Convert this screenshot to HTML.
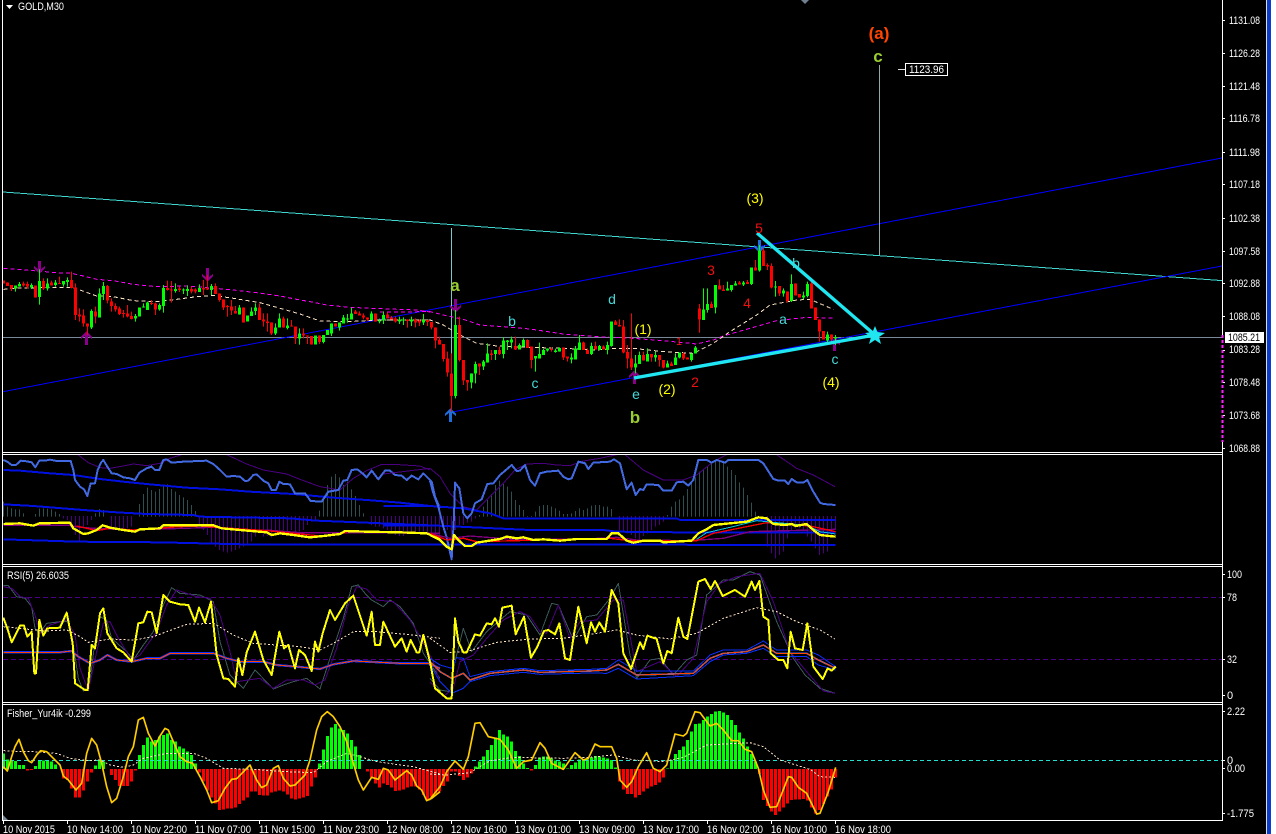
<!DOCTYPE html>
<html>
<head>
<meta charset="utf-8">
<title>GOLD,M30</title>
<style>
html,body{margin:0;padding:0;background:#fff;width:1276px;height:834px;overflow:hidden}
svg{display:block;position:absolute;left:0;top:0}
text{font-family:"Liberation Sans",sans-serif}
.ax{font-size:11px;fill:#fff}
.l{text-anchor:middle;font-size:14px}
.cy{fill:#45d9d9}.ye{fill:#ffff00}.re{fill:#f01010}
.bd{font-weight:bold;font-size:17px;text-anchor:middle}
</style>
</head>
<body>
<svg width="1276" height="834" viewBox="0 0 1276 834" xmlns="http://www.w3.org/2000/svg">
<rect x="0" y="0" width="1266" height="834" fill="#000"/>
<rect x="1266" y="0" width="1" height="834" fill="#d8dcec"/>
<rect x="1267" y="0" width="4" height="834" fill="#0a3ccc"/>
<rect x="1271" y="0" width="5" height="834" fill="#fff"/>
<polygon points="801,0 809,0 805,4" fill="#708090"/>

<!-- MAIN: straight lines -->
<g fill="none" shape-rendering="crispEdges">
<path d="M3 337.5H1222" stroke="#778899"/>
<path d="M3 192L1222 280.6" stroke="#40d8d0"/>
<path d="M3 391.7L1222 158" stroke="#0000ff"/>
<path d="M451 412.3L1222 266" stroke="#0000ff"/>
<path d="M451.5 228V412" stroke="#7cc8c8"/>
<path d="M879.5 65V255" stroke="#8fa8a8"/>
<path d="M898 69.5H906" stroke="#ddd"/>
<path d="M1222.5 335V442" stroke="#ff20ff" stroke-width="2" stroke-dasharray="3 2"/>
</g>
<!-- Main MAs -->
<g transform="translate(0,220) scale(.33333)" fill="none" stroke-width="3" shape-rendering="crispEdges">
<polyline stroke="#ff00ff" stroke-dasharray="12 9" points="10,145 100,152 170,158 215,160 250,168 290,178 340,182 400,193 470,200 560,198 610,202 700,210 770,218 840,228 890,238 930,245 980,255 1050,262 1140,266 1250,270 1290,276"/>
<polyline stroke="#ffe4c4" stroke-dasharray="12 9" points="10,208 60,204 120,203 180,202 220,203 245,212 290,228 340,230 400,242 470,245 530,238 590,230 640,226 700,235 780,248 830,262 900,282 960,303 1040,305 1140,300 1250,300 1290,300"/>
</g>
<g transform="translate(430,220) scale(.33333)" fill="none" stroke-width="3" shape-rendering="crispEdges">
<polyline stroke="#ff00ff" stroke-dasharray="12 9" points="-150,276 0,275 40,285 100,298 150,315 220,320 300,327 400,342 500,350 610,355 700,362 800,372 850,360 880,348 960,325 1040,302 1130,292 1215,295"/>
<polyline stroke="#ffe4c4" stroke-dasharray="12 9" points="-150,300 0,300 40,315 90,345 140,370 200,378 300,382 400,385 500,390 560,385 610,385 700,395 790,400 850,370 900,335 980,285 1020,255 1100,240 1140,238 1210,268"/>
</g>

<!-- arrows -->
<g fill="#8b008b" shape-rendering="crispEdges">
<polygon points="39.5,274 34,268 34,266 38,269 38,261 41,261 41,269 45,266 45,268"/>
<polygon points="207.5,282 202,276 202,274 206,277 206,268 209,268 209,277 213,274 213,276"/>
<polygon points="455.5,313 450,307 450,305 454,308 454,299 457,299 457,308 461,305 461,307"/>
<polygon points="86.5,331 92,337 92,339 88,336 88,345 85,345 85,336 81,339 81,337"/>
<polygon points="634.5,370 640,376 640,378 636,375 636,384 633,384 633,375 629,378 629,376"/>
<polygon points="835,338 840,343 840,345 836,342 836,351 833,351 833,342 830,345 830,343"/>
</g>
<g fill="#1e6fdc" shape-rendering="crispEdges">
<polygon points="450.5,408 456,414 456,416 452,413 452,422 449,422 449,413 445,416 445,414"/>
<polygon points="759.5,253 754,247 754,245 758,248 758,240 761,240 761,248 765,245 765,247"/>
</g>

<!-- candles -->
<g transform="translate(0,220) scale(1,.33333)" fill="none" shape-rendering="crispEdges">
<path stroke="#00ff00" stroke-width="1" d="M15.5 197V215M19.5 186V200M31.5 190V207M39.5 148V254M47.5 175V212M55.5 180V200M63.5 183V200M67.5 172V200M91.5 268V327M99.5 205V292M103.5 186V240M135.5 282V305M143.5 250V263M147.5 245V270M159.5 250V272M163.5 195V278M175.5 190V218M183.5 205V222M187.5 196V228M199.5 193V216M211.5 192V225M239.5 255V284M251.5 262V288M255.5 250V285M275.5 310V345M279.5 280V322M287.5 295V328M299.5 325V374M323.5 345V370M331.5 310V348M339.5 308V332M343.5 285V310M347.5 282V308M351.5 263V298M371.5 274V300M379.5 296V310M383.5 274V312M399.5 290V312M403.5 292V315M411.5 290V318M423.5 282V315M455.5 270V535M471.5 460V505M475.5 425V490M483.5 420V450M487.5 370V428M495.5 390V420M503.5 352V415M507.5 360V390M511.5 350V385M519.5 370V388M523.5 355V380M535.5 408V455M539.5 368V415M543.5 385V405M547.5 385V395M555.5 386V398M559.5 382V395M571.5 400V430M575.5 378V418M579.5 345V390M591.5 368V405M599.5 375V390M607.5 365V403M611.5 305V380M635.5 405V460M639.5 395V432M647.5 385V424M655.5 395V425M667.5 422V442M675.5 400V435M679.5 398V415M691.5 400V425M695.5 378V400M703.5 205V300M707.5 205V278M715.5 195V280M727.5 185V212M731.5 195V215M735.5 183V197M743.5 183V198M751.5 143V195M759.5 75V155M775.5 183V230M783.5 205V230M791.5 163V246M803.5 215V238M807.5 185V232M827.5 335V370M835.5 345V375"/>
<path stroke="#ff0000" stroke-width="1" d="M3.5 182V190M7.5 187V198M11.5 195V213M23.5 185V200M27.5 185V205M35.5 197V233M43.5 175V210M51.5 182V196M59.5 170V192M71.5 155V205M75.5 190V300M79.5 265V305M83.5 268V320M87.5 310V345M95.5 260V310M107.5 195V250M111.5 235V275M115.5 250V275M119.5 260V285M123.5 270V293M127.5 255V292M131.5 275V298M151.5 240V255M155.5 248V285M167.5 182V212M171.5 183V248M179.5 200V216M191.5 200V220M195.5 205V220M203.5 180V225M207.5 165V210M215.5 190V222M219.5 220V245M223.5 238V270M227.5 255V290M231.5 240V285M235.5 258V281M243.5 262V308M259.5 250V300M263.5 280V320M267.5 280V335M271.5 307V345M283.5 290V323M291.5 300V320M295.5 320V372M303.5 325V355M307.5 346V372M311.5 348V374M319.5 346V372M335.5 310V320M355.5 270V282M359.5 274V286M363.5 280V298M367.5 292V303M375.5 280V305M387.5 278V295M391.5 288V298M395.5 290V308M407.5 298V323M415.5 295V322M419.5 298V318M427.5 300V318M431.5 306V328M435.5 322V385M439.5 350V374M443.5 372V425M447.5 395V470M451.5 400V575M459.5 290V425M463.5 420V495M467.5 480V512M479.5 430V465M491.5 390V420M499.5 380V405M515.5 350V390M527.5 358V384M531.5 380V445M551.5 382V395M563.5 382V420M567.5 410V425M583.5 365V390M587.5 385V402M595.5 365V388M603.5 376V388M615.5 300V315M619.5 298V320M623.5 300V400M627.5 375V445M631.5 280V450M643.5 395V422M651.5 402V425M659.5 405V440M663.5 420V445M671.5 425V438M683.5 398V420M687.5 412V418M699.5 252V338M711.5 245V264M719.5 178V208M723.5 195V213M739.5 183V194M747.5 180V192M755.5 120V152M763.5 85V138M767.5 130V150M771.5 130V205M779.5 198V228M787.5 214V248M795.5 190V226M799.5 222V232M811.5 185V265M815.5 262V300M819.5 298V365M823.5 333V358M831.5 343V372"/>
<path stroke="#00ff00" stroke-width="3" d="M15.5 197V205M19.5 192V200M31.5 195V203M39.5 183V231M47.5 190V205M55.5 188V195M63.5 183V193M67.5 180V186M91.5 273V322M99.5 220V292M103.5 198V222M135.5 288V296M139.5 262V290M143.5 260V263M147.5 248V270M159.5 255V268M163.5 204V258M175.5 207V213M183.5 208V212M187.5 207V213M199.5 204V216M211.5 198V210M239.5 262V284M247.5 286V305M251.5 274V288M255.5 262V273M275.5 322V340M279.5 295V322M287.5 316V324M299.5 340V356M315.5 346V374M323.5 345V366M327.5 330V345M331.5 310V340M339.5 308V322M343.5 292V310M347.5 296V299M351.5 280V298M371.5 280V300M379.5 302V305M383.5 285V302M399.5 298V305M403.5 298V301M411.5 298V305M423.5 300V308M455.5 315V528M471.5 460V488M475.5 432V460M483.5 425V440M487.5 400V428M495.5 390V402M503.5 362V402M507.5 362V366M511.5 358V367M519.5 375V388M523.5 360V380M535.5 408V416M539.5 402V415M543.5 390V405M547.5 386V392M555.5 392V396M559.5 384V395M571.5 412V418M575.5 385V418M579.5 368V390M591.5 378V402M599.5 378V390M607.5 375V390M611.5 305V378M635.5 430V442M639.5 405V432M647.5 402V424M655.5 405V412M667.5 430V442M675.5 412V435M679.5 398V412M691.5 400V420M695.5 382V400M703.5 268V300M707.5 252V270M715.5 195V262M727.5 205V212M731.5 195V210M735.5 190V197M743.5 188V194M751.5 143V192M759.5 92V152M775.5 200V203M783.5 212V220M791.5 192V243M803.5 226V232M807.5 192V228M827.5 343V362M835.5 351V355"/>
<path stroke="#ff0000" stroke-width="3" d="M3.5 182V190M7.5 187V198M11.5 195V205M23.5 190V197M27.5 192V200M35.5 197V232M43.5 183V205M51.5 188V196M59.5 189V192M71.5 180V204M75.5 203V285M79.5 283V290M83.5 287V311M87.5 310V320M95.5 275V290M107.5 198V242M111.5 244V258M115.5 258V268M119.5 265V282M123.5 279V282M127.5 280V290M131.5 288V297M151.5 249V252M155.5 250V268M167.5 204V210M171.5 208V212M179.5 206V210M191.5 207V214M195.5 209V215M203.5 204V209M207.5 206V209M215.5 198V222M219.5 220V240M223.5 238V262M227.5 258V261M231.5 259V272M235.5 273V281M243.5 262V308M259.5 262V300M263.5 298V304M267.5 304V309M271.5 307V340M283.5 295V323M291.5 316V320M295.5 320V356M303.5 340V347M307.5 346V350M311.5 348V374M319.5 346V366M335.5 310V320M355.5 275V282M359.5 280V286M363.5 286V292M367.5 292V299M375.5 280V305M387.5 283V295M391.5 292V298M395.5 296V304M407.5 298V303M415.5 300V308M419.5 302V308M427.5 300V306M431.5 306V322M435.5 322V362M439.5 360V374M443.5 372V417M447.5 415V458M451.5 460V528M459.5 315V420M463.5 420V482M467.5 480V488M479.5 430V440M491.5 400V405M499.5 390V402M515.5 378V388M527.5 360V384M531.5 380V420M551.5 387V390M563.5 382V412M567.5 410V415M583.5 368V390M587.5 390V402M595.5 378V388M603.5 380V388M615.5 305V315M619.5 315V320M623.5 320V398M627.5 396V416M631.5 415V442M643.5 405V422M651.5 402V412M659.5 405V420M663.5 420V442M671.5 430V438M683.5 400V415M687.5 412V418M699.5 265V298M711.5 252V264M719.5 196V208M723.5 208V213M739.5 188V194M747.5 186V192M755.5 143V152M763.5 92V138M767.5 135V140M771.5 138V203M779.5 198V220M787.5 214V243M795.5 190V226M799.5 222V232M811.5 190V265M815.5 262V300M819.5 298V335M823.5 333V358M831.5 343V358"/>
</g>

<!-- thick triangle -->
<g fill="none" stroke="#1fe6f0" stroke-width="3.4">
<path d="M634 378L875 335"/>
<path d="M757 233L875 335"/>
</g>
<polygon fill="#1fe6f0" points="875,326 877.5,332 885,333 879,337 881,344 875,340 869,344 871,337 865,333 872.5,332"/>

<!-- main labels -->
<text class="bd" x="879" y="39" fill="#ff4500">(a)</text>
<text class="bd" x="878" y="62" fill="#9acd32">c</text>
<text class="bd" x="635" y="423" fill="#9acd32">b</text>
<text class="bd" x="455" y="291" fill="#9acd32">a</text>
<text class="l ye" x="755" y="203">(3)</text>
<text class="l ye" x="643" y="334">(1)</text>
<text class="l ye" x="667" y="394">(2)</text>
<text class="l ye" x="831" y="387">(4)</text>
<text class="l re" x="759" y="233">5</text>
<text class="l re" x="711" y="275">3</text>
<text class="l re" x="747" y="308">4</text>
<text class="l re" x="695" y="387">2</text>
<text class="l re" x="679" y="345" style="font-size:11px">1</text>
<text class="l cy" x="612" y="304">d</text>
<text class="l cy" x="512" y="326">b</text>
<text class="l cy" x="535" y="388">c</text>
<text class="l cy" x="636" y="399">e</text>
<text class="l cy" x="796" y="268">b</text>
<text class="l cy" x="783" y="324">a</text>
<text class="l cy" x="835" y="364">c</text>

<!-- PANEL 1 hist -->
<g transform="translate(0,450) scale(1,.33333)" fill="none" stroke-width="1" shape-rendering="crispEdges">
<path stroke="#2f4f4f" d="M3.5 155V200M7.5 170V200M11.5 175V200M15.5 178V200M19.5 178V200M23.5 190V200M35.5 192V200M39.5 176V200M43.5 175V200M47.5 176V200M51.5 178V200M55.5 185V200M59.5 192V200M95.5 190V200M99.5 177V200M103.5 180V200M139.5 162V200M143.5 132V200M147.5 113V200M151.5 120V200M155.5 125V200M159.5 117V200M163.5 107V200M167.5 103V200M171.5 117V200M175.5 125V200M179.5 135V200M183.5 142V200M187.5 150V200M191.5 165V200M195.5 183V200M319.5 182V200M323.5 147V200M327.5 105V200M331.5 80V200M335.5 72V200M339.5 82V200M343.5 105V200M347.5 95V200M351.5 118V200M355.5 138V200M359.5 165V200M363.5 190V200M479.5 195V200M483.5 170V200M487.5 150V200M491.5 132V200M495.5 105V200M499.5 92V200M503.5 102V200M507.5 110V200M511.5 125V200M515.5 150V200M519.5 165V200M523.5 180V200M527.5 198V200M531.5 198V200M535.5 185V200M539.5 168V200M543.5 165V200M547.5 165V200M551.5 170V200M555.5 175V200M559.5 182V200M563.5 192V200M567.5 192V200M571.5 190V200M575.5 183V200M579.5 175V200M583.5 180V200M587.5 175V200M591.5 167V200M595.5 165V200M599.5 165V200M603.5 170V200M607.5 170V200M611.5 177V200M667.5 195V200M671.5 170V200M675.5 155V200M679.5 148V200M683.5 137V200M687.5 117V200M691.5 100V200M695.5 82V200M699.5 65V200M703.5 57V200M707.5 50V200M711.5 40V200M715.5 33V200M719.5 32V200M723.5 35V200M727.5 50V200M731.5 60V200M735.5 75V200M739.5 97V200M743.5 113V200M747.5 135V200M751.5 158V200M755.5 185V200"/>
<path stroke="#4b0082" d="M63.5 198V205M67.5 198V210M71.5 198V235M75.5 198V255M79.5 198V275M83.5 198V235M87.5 198V225M91.5 198V210M111.5 198V230M115.5 198V235M119.5 198V240M123.5 198V240M127.5 198V235M131.5 198V230M199.5 198V222M203.5 198V240M207.5 198V255M211.5 198V280M215.5 198V290M219.5 198V300M223.5 198V305M227.5 198V308M231.5 198V305M235.5 198V300M239.5 198V295M243.5 198V290M247.5 198V285M251.5 198V275M255.5 198V260M259.5 198V250M263.5 198V260M267.5 198V258M271.5 198V262M275.5 198V250M279.5 198V250M283.5 198V240M287.5 198V245M291.5 198V240M295.5 198V250M299.5 198V245M303.5 198V240M307.5 198V225M311.5 198V215M315.5 198V210M371.5 198V225M375.5 198V230M379.5 198V230M383.5 198V235M387.5 198V240M391.5 198V245M395.5 198V255M399.5 198V258M403.5 198V258M407.5 198V250M411.5 198V250M415.5 198V248M419.5 198V245M423.5 198V245M427.5 198V255M431.5 198V250M435.5 198V260M439.5 198V270M443.5 198V225M447.5 198V240M451.5 198V280M455.5 198V240M459.5 198V225M463.5 198V225M467.5 198V218M471.5 198V215M475.5 198V205M619.5 198V240M623.5 198V245M627.5 198V250M631.5 198V255M635.5 198V265M639.5 198V268M643.5 198V258M647.5 198V250M651.5 198V240M655.5 198V230M659.5 198V225M663.5 198V215M767.5 198V290M771.5 198V310M775.5 198V325M779.5 198V315M783.5 198V305M787.5 198V265M791.5 198V240M795.5 198V235M799.5 198V235M803.5 198V240M807.5 198V260M811.5 198V275M815.5 198V295M819.5 198V315M823.5 198V310M827.5 198V305M831.5 198V260M835.5 198V240"/>
</g>
<!-- PANEL 1 lines -->
<g transform="translate(0,450) scale(.33333)" fill="none" stroke-linejoin="round" shape-rendering="crispEdges">
<polyline stroke="#4b0082" stroke-width="3" points="235,15 265,38 300,53 330,55 370,48 400,42 440,47 480,40 510,25 545,14"/>
<polyline stroke="#4b0082" stroke-width="3" points="680,14 740,42 790,60 860,72 900,88 960,110 1020,120 1060,85 1100,62 1145,43 1180,43 1260,48 1290,60"/>
<g stroke="#0010e0" stroke-width="6">
<polyline points="10,60 60,62 150,70 220,75 300,87 370,95 450,103 560,113 660,118 750,125 880,132 1000,143 1100,150 1200,158 1290,168"/>
<polyline points="10,163 100,168 250,180 350,187 440,192 580,195 600,200 870,205 950,212 1100,218 1290,226"/>
<polyline points="10,268 230,275 480,277 730,283 1290,283"/>
</g>
<polyline stroke="#4169e1" stroke-width="6" points="10,30 22,35 35,45 48,45 62,32 80,34 95,37 106,52 118,32 135,32 150,29 170,33 212,33 220,60 225,90 240,110 252,118 262,138 272,100 285,100 293,60 303,38 310,30 322,50 335,70 350,72 370,82 390,85 405,90 418,68 440,55 455,50 465,60 478,60 490,30 500,28 515,38 550,35 620,32 640,42 660,60 680,80 700,78 720,80 735,93 745,92 760,75 770,73 790,92 805,100 815,120 828,120 838,95 850,102 870,103 885,130 915,130 932,153 965,155 985,125 1015,120 1030,92 1042,90 1055,60 1072,58 1090,72 1100,82 1115,62 1135,88 1155,62 1170,62 1185,75 1205,77 1220,90 1235,77 1255,88 1270,70 1295,95 1305,140 1320,175"/>
<polyline stroke="#800080" stroke-width="4" points="10,226 210,226 240,232 300,236 400,240 640,232 720,240 800,240 900,248 1020,248 1320,250"/>
<polyline stroke="#ff0000" stroke-width="4" points="230,228 290,242 330,235 400,240 540,230 600,228 680,234 800,242 880,250 960,258 1040,248"/>
<polyline stroke="#ffff00" stroke-width="7" points="10,222 60,220 100,227 118,220 210,218 220,235 250,252 265,250 290,240 308,226 330,233 370,240 405,245 420,238 480,235 490,226 640,226 665,235 720,240 800,247 815,255 840,250 880,255 930,262 970,258 1020,252 1035,243 1100,245 1200,247 1280,250 1300,258 1320,267"/>
</g>
<g transform="translate(430,450) scale(.33333)" fill="none" stroke-linejoin="round" shape-rendering="crispEdges">
<polyline stroke="#4b0082" stroke-width="3" points="-140,72 0,55 30,80 60,130 100,170 140,180 170,150 220,100 255,60 290,42 340,40 380,45 420,47 460,33 510,25 560,14"/>
<polyline stroke="#4b0082" stroke-width="3" points="585,14 640,60 700,90 760,90 800,75 850,35 890,14"/>
<polyline stroke="#4b0082" stroke-width="3" points="1040,14 1100,55 1150,75 1215,110"/>
<g stroke="#0010e0" stroke-width="6">
<polyline points="-140,168 0,168 100,175 180,190 220,205 740,205 750,210 1217,210"/>
<polyline points="-140,226 0,226 130,232 300,240 520,240 560,245 750,247 1217,247"/>
<polyline points="-140,283 0,283 1217,285"/>
</g>
<polyline stroke="#4169e1" stroke-width="6" points="0,92 10,130 25,170 40,230 50,262 65,328 72,200 75,98 88,115 100,190 112,205 125,190 135,160 155,148 172,102 190,100 210,75 230,58 245,45 260,63 270,62 285,45 300,90 315,107 330,70 350,65 385,62 400,80 415,88 425,85 445,35 465,40 475,57 490,38 540,35 552,28 570,40 590,118 605,98 617,135 630,117 640,120 650,103 685,105 700,122 725,122 740,97 760,95 775,107 790,90 805,30 830,30 845,38 860,30 885,38 895,30 985,30 1000,40 1030,87 1045,92 1065,92 1075,102 1085,87 1100,97 1120,98 1132,90 1150,125 1170,158 1180,162 1217,165"/>
<polyline stroke="#800080" stroke-width="4" points="0,250 60,265 120,258 250,268 450,268 560,262 620,270 780,272 880,265 960,245 1217,238"/>
<polyline stroke="#ff0000" stroke-width="4" points="0,250 50,270 100,265 140,275 540,265 600,272 800,272 850,250 950,230 1010,218 1140,228 1217,245"/>
<polyline stroke="#00c8e0" stroke-width="3" points="800,268 830,248 900,232 980,212 1040,218 1130,226 1170,245 1217,252"/>
<polyline stroke="#ffff00" stroke-width="7" points="0,255 30,270 50,290 65,298 72,255 85,270 105,288 125,288 140,278 210,267 230,260 260,265 280,262 310,270 340,268 390,272 440,267 530,267 545,250 565,250 590,272 610,278 640,272 690,272 700,277 785,272 805,250 830,238 850,225 950,215 985,202 1010,205 1030,222 1065,225 1085,222 1097,228 1130,222 1150,240 1170,255 1217,260"/>
</g>

<!-- PANEL 2 RSI -->
<path d="M3 597.5H1222M3 659.5H1222" stroke="#4b0082" stroke-dasharray="5 3" fill="none" shape-rendering="crispEdges"/>
<g transform="translate(0,565) scale(.33333)" fill="none" stroke-linejoin="round" shape-rendering="crispEdges">
<polyline stroke="#3a5a5a" stroke-width="3" points="10,62 25,62 50,95 75,100 95,125 105,190 118,205 140,175 180,170 205,170 220,240 235,340 250,378 268,360 285,230 300,155 320,165 335,220 380,260 400,285 430,240 460,200 490,120 515,68 540,85 600,90 640,110 660,230 690,330 730,370 765,315 820,372 850,360 880,350 920,340 960,372 990,280 1030,160 1055,65 1075,60 1095,85 1115,105 1150,125 1170,105 1200,125 1240,175 1270,265 1320,340"/>
<polyline stroke="#4b0082" stroke-width="3" points="10,65 35,70 60,95 85,100 105,150 120,205 150,180 200,165 225,210 240,310 265,378 290,260 310,175 330,170 355,220 395,285 420,270 470,200 500,120 530,75 590,95 630,100 660,150 690,260 710,350 780,340 820,370 860,345 910,345 945,360 975,345 1010,250 1045,120 1070,65 1100,72 1130,105 1180,110 1230,165 1260,215 1300,290 1320,350"/>
<polyline stroke="#ffe4c4" stroke-width="3" stroke-dasharray="6 6" points="10,185 60,190 130,198 200,195 240,215 265,232 330,222 400,225 460,215 500,200 560,178 640,175 700,210 760,235 830,240 900,245 960,255 1000,235 1060,200 1130,200 1240,210 1320,220"/>
<polyline stroke="#0a30ff" stroke-width="7" points="10,262 110,262 180,262 215,258 235,275 270,295 300,285 322,270 350,285 395,290 440,280 480,280 510,265 640,265 680,280 720,290 790,290 830,300 890,305 960,312 1000,298 1060,288 1200,295 1285,295 1320,310"/>
<polyline stroke="#ff4500" stroke-width="3" points="10,262 110,262 180,262 215,258 235,275 270,295 300,285 322,270 350,285 395,290 440,280 480,280 510,265 640,265 680,280 720,290 790,290 830,300 890,305 960,312 1000,298 1060,288 1200,295 1285,295 1320,310"/>
<polyline stroke="#ffff00" stroke-width="6" points="10,158 22,190 35,232 60,182 72,182 82,215 95,200 103,325 108,325 118,165 130,212 142,190 180,188 200,143 218,235 225,355 255,375 263,375 275,240 285,250 300,145 310,130 322,205 350,250 370,262 395,290 415,175 430,172 442,140 455,142 470,205 490,90 510,110 540,118 565,120 585,170 597,128 615,172 633,110 650,270 670,340 685,342 705,365 715,280 727,330 740,262 765,200 790,285 815,330 838,200 852,250 865,240 885,310 897,255 915,270 935,318 945,230 955,260 968,205 990,135 1005,165 1035,115 1060,92 1100,212 1115,140 1125,240 1140,240 1150,170 1185,245 1205,220 1220,260 1232,225 1250,262 1258,262 1270,210 1290,290 1305,370 1320,380"/>
</g>
<g transform="translate(430,565) scale(.33333)" fill="none" stroke-linejoin="round" shape-rendering="crispEdges">
<polyline stroke="#3a5a5a" stroke-width="3" points="0,340 30,375 60,380 75,290 100,190 125,260 170,200 210,165 240,140 290,150 330,210 365,115 385,120 430,225 470,155 500,150 540,100 565,55 600,270 620,340 660,285 690,280 730,330 770,285 800,270 830,90 880,45 910,45 960,20 990,30 1040,170 1090,280 1125,330 1170,370 1215,385"/>
<polyline stroke="#4b0082" stroke-width="3" points="0,350 40,395 70,370 90,290 130,270 170,220 220,165 270,140 300,155 330,200 350,205 385,120 420,220 450,170 500,165 550,105 580,105 620,320 690,290 740,335 790,280 830,110 870,55 920,35 990,25 1030,110 1080,260 1130,320 1180,378 1215,385"/>
<polyline stroke="#ffe4c4" stroke-width="3" stroke-dasharray="6 6" points="0,220 60,262 110,260 200,232 300,222 400,220 500,205 560,195 620,210 720,222 800,205 880,160 980,128 1040,140 1100,170 1170,195 1215,222"/>
<polyline stroke="#0a30ff" stroke-width="3" points="0,280 30,300 65,310 80,278 100,280 120,335 180,320 280,310 330,317 480,313 530,310 565,285 620,318 790,318 840,270 880,255 950,255 1000,228 1040,255 1130,255 1165,270 1217,305"/>
<polyline stroke="#0a30ff" stroke-width="3" points="0,300 30,350 65,385 100,370 120,350 180,332 280,322 330,328 480,324 530,325 565,310 620,342 790,332 840,290 880,270 950,265 1000,250 1040,275 1130,275 1165,300 1217,315"/>
<polyline stroke="#4169e1" stroke-width="5" points="0,290 30,320 65,340 100,325 120,345 180,325 280,315 330,322 480,318 530,315 565,298 620,330 790,325 840,280 880,265 950,260 1000,240 1040,265 1130,265 1165,285 1217,310"/>
<polyline stroke="#ff4500" stroke-width="3" points="0,290 30,320 65,340 100,325 120,345 180,325 280,315 330,322 480,318 530,315 565,298 620,330 790,325 840,280 880,265 950,260 1000,240 1040,265 1130,265 1165,285 1217,310"/>
<polyline stroke="#ffff00" stroke-width="6" points="0,290 15,370 50,400 65,400 75,160 85,230 100,262 110,262 135,208 150,212 170,175 185,178 195,160 207,185 217,128 245,122 257,208 282,155 303,278 322,245 342,198 355,195 375,208 388,175 405,280 420,285 445,125 470,235 483,172 495,200 508,172 525,200 545,75 565,115 580,265 603,312 630,232 640,252 652,212 680,222 700,295 712,258 725,265 745,158 760,215 772,222 805,50 825,42 842,72 855,48 878,93 915,75 945,95 965,50 975,75 988,48 1000,155 1015,165 1022,265 1045,285 1060,285 1072,310 1082,200 1095,250 1118,255 1132,175 1150,305 1178,342 1193,310 1205,317 1217,305"/>
</g>

<!-- PANEL 3 Fisher -->
<g transform="translate(0,700) scale(1,.33333)" fill="none" stroke-width="3" shape-rendering="crispEdges">
<path stroke="#00ff00" d="M3.5 160V207M7.5 178V207M11.5 183V207M15.5 183V207M19.5 195V207M23.5 195V207M35.5 198V207M39.5 182V207M43.5 182V207M47.5 182V207M51.5 185V207M55.5 193V207M95.5 196V207M99.5 182V207M103.5 185V207M139.5 165V207M143.5 135V207M147.5 113V207M151.5 125V207M155.5 120V207M159.5 110V207M163.5 105V207M167.5 100V207M171.5 120V207M175.5 125V207M179.5 140V207M183.5 145V207M187.5 155V207M191.5 165V207M195.5 190V207M319.5 190V207M323.5 148V207M327.5 108V207M331.5 82V207M335.5 72V207M339.5 85V207M343.5 90V207M347.5 100V207M351.5 120V207M355.5 140V207M359.5 165V207M475.5 200V207M479.5 185V207M483.5 170V207M487.5 150V207M491.5 135V207M495.5 112V207M499.5 90V207M503.5 103V207M507.5 110V207M511.5 125V207M515.5 153V207M519.5 168V207M523.5 190V207M527.5 204V207M535.5 195V207M539.5 172V207M543.5 170V207M547.5 170V207M551.5 175V207M555.5 182V207M559.5 185V207M563.5 190V207M567.5 205V207M571.5 195V207M575.5 188V207M579.5 178V207M583.5 180V207M587.5 178V207M591.5 172V207M595.5 168V207M599.5 170V207M603.5 172V207M607.5 175V207M611.5 180V207M615.5 203V207M667.5 205V207M671.5 180V207M675.5 162V207M679.5 150V207M683.5 140V207M687.5 120V207M691.5 95V207M695.5 72V207M699.5 70V207M703.5 60V207M707.5 50V207M711.5 42V207M715.5 35V207M719.5 33V207M723.5 38V207M727.5 45V207M731.5 60V207M735.5 75V207M739.5 97V207M743.5 115V207M747.5 140V207M751.5 162V207M755.5 185V207"/>
<path stroke="#ff0000" d="M27.5 207V212M31.5 207V210M63.5 207V235M67.5 207V240M71.5 207V265M75.5 207V293M79.5 207V293M83.5 207V272M87.5 207V245M91.5 207V218M111.5 207V225M115.5 207V240M119.5 207V258M123.5 207V258M127.5 207V258M131.5 207V245M135.5 207V212M199.5 207V218M203.5 207V245M207.5 207V272M211.5 207V292M215.5 207V310M219.5 207V330M223.5 207V328M227.5 207V326M231.5 207V325M235.5 207V322M239.5 207V312M243.5 207V302M247.5 207V292M251.5 207V275M255.5 207V275M259.5 207V285M263.5 207V287M267.5 207V287M271.5 207V278M275.5 207V275M279.5 207V272M283.5 207V275M287.5 207V283M291.5 207V295M295.5 207V298M299.5 207V295M303.5 207V292M307.5 207V288M311.5 207V260M315.5 207V232M367.5 207V214M371.5 207V232M375.5 207V250M379.5 207V262M383.5 207V250M387.5 207V255M391.5 207V262M395.5 207V273M399.5 207V272M403.5 207V268M407.5 207V262M411.5 207V260M415.5 207V260M419.5 207V268M423.5 207V285M427.5 207V300M431.5 207V290M435.5 207V280M439.5 207V275M443.5 207V258M447.5 207V245M451.5 207V215M455.5 207V215M459.5 207V228M463.5 207V240M467.5 207V232M471.5 207V220M531.5 207V212M619.5 207V245M623.5 207V268M627.5 207V282M631.5 207V282M635.5 207V292M639.5 207V285M643.5 207V275M647.5 207V265M651.5 207V260M655.5 207V255M659.5 207V248M663.5 207V232M759.5 207V222M763.5 207V300M767.5 207V318M771.5 207V335M775.5 207V345M779.5 207V335M783.5 207V322M787.5 207V310M791.5 207V300M795.5 207V298M799.5 207V298M803.5 207V297M807.5 207V302M811.5 207V322M815.5 207V340M819.5 207V330M823.5 207V312M827.5 207V290M831.5 207V268M835.5 207V232"/>
</g>
<path d="M3 760.5H1222" stroke="#20e0d0" stroke-dasharray="4 3" fill="none" shape-rendering="crispEdges"/>
<polygon points="3,815 8,820 3,820" fill="#778899"/>
<g transform="translate(0,700) scale(.33333)" fill="none" stroke-linejoin="round">
<polyline stroke="#ffe4c4" stroke-width="3" stroke-dasharray="6 6" shape-rendering="crispEdges" points="10,152 60,155 100,155 170,160 210,175 260,182 300,180 330,195 370,202 400,195 430,175 500,160 580,160 620,175 670,205 760,208 860,215 940,218 980,185 1040,160 1080,170 1130,185 1240,200 1320,222"/>
<polyline stroke="#ffcc00" stroke-width="5" points="10,200 22,213 35,170 45,140 57,118 70,155 85,182 95,188 110,165 122,152 140,155 160,175 180,195 190,228 205,240 228,270 245,250 260,160 275,115 290,135 305,190 320,260 335,308 350,295 370,230 385,170 400,140 415,60 430,52 445,100 465,138 480,108 495,85 505,90 520,125 540,170 560,185 578,190 600,230 620,270 635,308 655,302 675,265 695,238 710,236 750,195 770,240 785,263 800,255 820,205 835,197 850,235 870,258 885,255 915,225 930,180 950,90 965,50 982,35 1000,50 1020,80 1040,125 1060,190 1075,240 1090,270 1115,232 1135,238 1150,205 1165,210 1185,240 1220,212 1235,225 1250,258 1265,270 1280,302 1295,295 1320,275"/>
</g>
<g transform="translate(430,700) scale(.33333)" fill="none" stroke-linejoin="round">
<polyline stroke="#ffe4c4" stroke-width="3" stroke-dasharray="6 6" shape-rendering="crispEdges" points="0,222 50,225 120,218 180,182 250,172 400,175 480,172 550,165 610,180 700,185 760,172 830,135 960,128 1000,140 1050,180 1140,208 1170,230 1217,232"/>
<polyline stroke="#ffcc00" stroke-width="5" points="-2,300 30,260 50,215 75,183 100,208 115,170 135,70 150,68 175,110 210,118 235,150 260,205 280,185 305,180 330,128 345,145 365,190 400,208 435,158 460,180 475,175 495,132 510,140 545,140 560,175 570,240 590,262 605,245 625,200 650,158 670,205 690,215 710,195 735,102 760,108 770,100 795,35 810,38 840,78 860,70 880,90 905,122 925,122 945,148 965,155 985,205 1000,270 1020,322 1040,320 1075,230 1085,232 1105,262 1130,280 1160,342 1170,340 1195,275 1217,202"/>
</g>

<!-- Panel borders -->
<g fill="#fff" shape-rendering="crispEdges">
<rect x="2" y="0" width="1" height="820"/>
<rect x="1222" y="0" width="1" height="335"/>
<rect x="1222" y="442" width="1" height="379"/>
<rect x="2" y="452" width="1220" height="1"/>
<rect x="2" y="454" width="1220" height="1"/>
<rect x="2" y="564" width="1220" height="1"/>
<rect x="2" y="566" width="1220" height="1"/>
<rect x="2" y="702" width="1220" height="1"/>
<rect x="2" y="704" width="1220" height="1"/>
<rect x="2" y="820" width="1220" height="1"/>
</g>

<!-- Right axis ticks -->
<path d="M1223 20.5h2M1223 53.5h2M1223 86.5h2M1223 118.5h2M1223 152.5h2M1223 184.5h2M1223 218.5h2M1223 251.5h2M1223 283.5h2M1223 316.5h2M1223 350.5h2M1223 382.5h2M1223 415.5h2M1223 448.5h2M1223 574.5h2M1223 597.5h2M1223 659.5h2M1223 695.5h2M1223 711.5h2M1223 760.5h2M1223 768.5h2M1223 813.5h2" stroke="#fff" fill="none" shape-rendering="crispEdges"/>
<text class="ax" x="1229" y="24" textLength="31" lengthAdjust="spacingAndGlyphs">1131.08</text>
<text class="ax" x="1229" y="57" textLength="31" lengthAdjust="spacingAndGlyphs">1126.28</text>
<text class="ax" x="1229" y="90" textLength="31" lengthAdjust="spacingAndGlyphs">1121.48</text>
<text class="ax" x="1229" y="122" textLength="31" lengthAdjust="spacingAndGlyphs">1116.78</text>
<text class="ax" x="1229" y="156" textLength="31" lengthAdjust="spacingAndGlyphs">1111.98</text>
<text class="ax" x="1229" y="188" textLength="31" lengthAdjust="spacingAndGlyphs">1107.18</text>
<text class="ax" x="1229" y="222" textLength="31" lengthAdjust="spacingAndGlyphs">1102.38</text>
<text class="ax" x="1229" y="255" textLength="31" lengthAdjust="spacingAndGlyphs">1097.58</text>
<text class="ax" x="1229" y="287" textLength="31" lengthAdjust="spacingAndGlyphs">1092.88</text>
<text class="ax" x="1229" y="320" textLength="31" lengthAdjust="spacingAndGlyphs">1088.08</text>
<rect x="1225" y="332" width="39" height="11" fill="#fff"/>
<text x="1228" y="341" font-size="11" fill="#000" textLength="32" lengthAdjust="spacingAndGlyphs">1085.21</text>
<text class="ax" x="1229" y="353" textLength="31" lengthAdjust="spacingAndGlyphs">1083.28</text>
<text class="ax" x="1229" y="386" textLength="31" lengthAdjust="spacingAndGlyphs">1078.48</text>
<text class="ax" x="1229" y="419" textLength="31" lengthAdjust="spacingAndGlyphs">1073.68</text>
<text class="ax" x="1229" y="452" textLength="31" lengthAdjust="spacingAndGlyphs">1068.88</text>
<text class="ax" x="1227" y="578" textLength="15" lengthAdjust="spacingAndGlyphs">100</text>
<text class="ax" x="1227" y="601" textLength="10" lengthAdjust="spacingAndGlyphs">78</text>
<text class="ax" x="1227" y="663" textLength="10" lengthAdjust="spacingAndGlyphs">32</text>
<text class="ax" x="1227" y="699">0</text>
<text class="ax" x="1227" y="715" textLength="18" lengthAdjust="spacingAndGlyphs">2.22</text>
<text class="ax" x="1227" y="764">0</text>
<text class="ax" x="1227" y="772" textLength="18" lengthAdjust="spacingAndGlyphs">0.00</text>
<text class="ax" x="1227" y="817" textLength="27" lengthAdjust="spacingAndGlyphs">-1.775</text>

<!-- price box -->
<rect x="905.5" y="63.5" width="42" height="12" fill="#000" stroke="#fff"/>
<text class="ax" x="909" y="73" textLength="35" lengthAdjust="spacingAndGlyphs">1123.96</text>

<!-- headers -->
<polygon points="6,5 13,5 9.5,9" fill="#fff"/>
<text class="ax" x="18" y="10" textLength="46" lengthAdjust="spacingAndGlyphs">GOLD,M30</text>
<text class="ax" x="7" y="579" textLength="62" lengthAdjust="spacingAndGlyphs">RSI(5) 26.6035</text>
<text class="ax" x="7" y="717" textLength="84" lengthAdjust="spacingAndGlyphs">Fisher_Yur4ik -0.299</text>

<!-- Time axis -->
<path d="M3.5 820v4M67.5 820v4M131.5 820v4M195.5 820v4M259.5 820v4M323.5 820v4M387.5 820v4M451.5 820v4M515.5 820v4M579.5 820v4M643.5 820v4M707.5 820v4M771.5 820v4M835.5 820v4" stroke="#fff" fill="none" shape-rendering="crispEdges"/>
<text class="ax" x="3" y="833" textLength="52" lengthAdjust="spacingAndGlyphs">10 Nov 2015</text>
<text class="ax" x="67" y="833" textLength="56" lengthAdjust="spacingAndGlyphs">10 Nov 14:00</text>
<text class="ax" x="131" y="833" textLength="56" lengthAdjust="spacingAndGlyphs">10 Nov 22:00</text>
<text class="ax" x="195" y="833" textLength="56" lengthAdjust="spacingAndGlyphs">11 Nov 07:00</text>
<text class="ax" x="259" y="833" textLength="56" lengthAdjust="spacingAndGlyphs">11 Nov 15:00</text>
<text class="ax" x="323" y="833" textLength="56" lengthAdjust="spacingAndGlyphs">11 Nov 23:00</text>
<text class="ax" x="387" y="833" textLength="56" lengthAdjust="spacingAndGlyphs">12 Nov 08:00</text>
<text class="ax" x="451" y="833" textLength="56" lengthAdjust="spacingAndGlyphs">12 Nov 16:00</text>
<text class="ax" x="515" y="833" textLength="56" lengthAdjust="spacingAndGlyphs">13 Nov 01:00</text>
<text class="ax" x="579" y="833" textLength="56" lengthAdjust="spacingAndGlyphs">13 Nov 09:00</text>
<text class="ax" x="643" y="833" textLength="56" lengthAdjust="spacingAndGlyphs">13 Nov 17:00</text>
<text class="ax" x="707" y="833" textLength="56" lengthAdjust="spacingAndGlyphs">16 Nov 02:00</text>
<text class="ax" x="771" y="833" textLength="56" lengthAdjust="spacingAndGlyphs">16 Nov 10:00</text>
<text class="ax" x="835" y="833" textLength="56" lengthAdjust="spacingAndGlyphs">16 Nov 18:00</text>
</svg>
</body>
</html>
